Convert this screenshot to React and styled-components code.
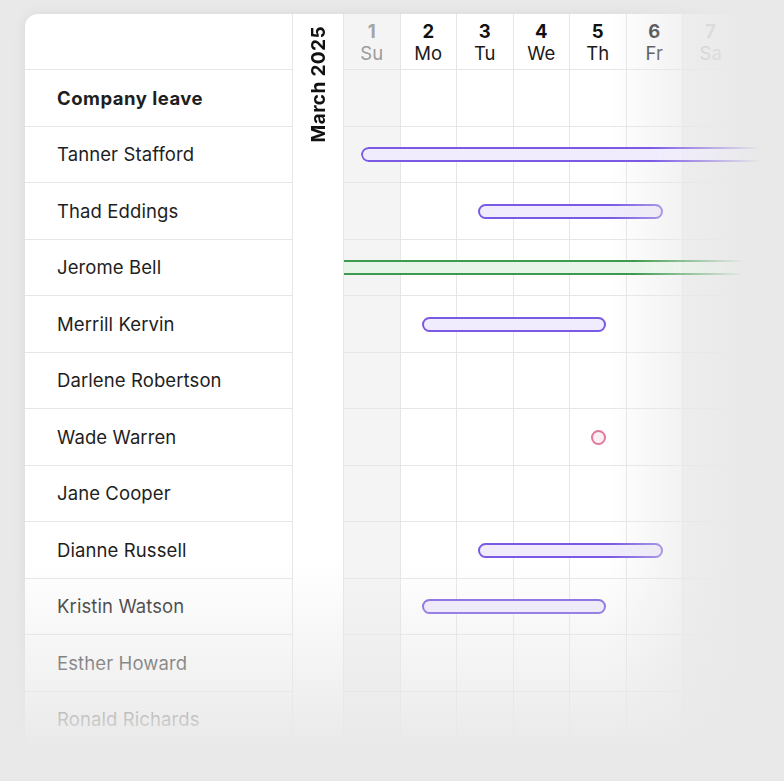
import React from 'react'
import styled, { createGlobalStyle, css } from 'styled-components'

const BG = '#e9e9e9'
const LINE = '#e6e6e6'
const COL = 56.5

const GlobalStyle = createGlobalStyle`
  html, body {
    margin: 0;
    padding: 0;
    background: ${BG};
    font-family: Inter, "Noto Sans", "Liberation Sans", sans-serif;
    -webkit-font-smoothing: antialiased;
  }
`

const days = [
    { n: 1, d: 'Su', off: true },
    { n: 2, d: 'Mo' },
    { n: 3, d: 'Tu' },
    { n: 4, d: 'We' },
    { n: 5, d: 'Th' },
    { n: 6, d: 'Fr' },
    { n: 7, d: 'Sa', off: true },
    { n: 8, d: 'Su', off: true },
]

// kind: bar | band | dot
const people = [
    { name: 'Company leave', bold: true },
    { name: 'Tanner Stafford', mark: { kind: 'bar', from: 1, to: 8, left: 17, right: 0, bleed: true } },
    { name: 'Thad Eddings', mark: { kind: 'bar', from: 3, to: 6, left: 21, right: 20 } },
    { name: 'Jerome Bell', mark: { kind: 'band', from: 1, to: 8 } },
    { name: 'Merrill Kervin', mark: { kind: 'bar', from: 2, to: 5, left: 21, right: 21 } },
    { name: 'Darlene Robertson' },
    { name: 'Wade Warren', mark: { kind: 'dot', from: 5 } },
    { name: 'Jane Cooper' },
    { name: 'Dianne Russell', mark: { kind: 'bar', from: 3, to: 6, left: 21, right: 20 } },
    { name: 'Kristin Watson', mark: { kind: 'bar', from: 2, to: 5, left: 21, right: 21 } },
    { name: 'Esther Howard' },
    { name: 'Ronald Richards' },
]

const Page = styled.div`
  position: relative;
  width: 100vw;
  height: 100vh;
  overflow: hidden;
  box-sizing: border-box;
  padding: 14px 0 0 25px;
`

const Card = styled.div`
  display: flex;
  width: 820px;
  background: #fff;
  border-top-left-radius: 13px;
  box-shadow: 0 0 14px rgba(0, 0, 0, 0.07);
  overflow: hidden;
`

const NameColumn = styled.div`
  width: 268px;
  flex-shrink: 0;
  border-right: 1px solid ${LINE};
  box-sizing: border-box;
`

const NameHead = styled.div`
  height: 56px;
  border-bottom: 1px solid ${LINE};
  box-sizing: border-box;
`

const NameRow = styled.div`
  height: ${COL}px;
  box-sizing: border-box;
  border-bottom: 1px solid ${LINE};
  display: flex;
  align-items: center;
  padding-left: 32px;
  font-size: 18.5px;
  color: #1e1e1e;
  font-weight: ${p => (p.$bold ? 700 : 400)};
  letter-spacing: ${p => (p.$bold ? '0.5px' : '0.1px')};
`

const MonthColumn = styled.div`
  width: 51px;
  flex-shrink: 0;
  border-right: 1px solid ${LINE};
  box-sizing: border-box;
  display: flex;
  justify-content: center;
  padding-top: 12px;
`

const MonthLabel = styled.div`
  writing-mode: vertical-rl;
  transform: rotate(180deg);
  font-size: 19px;
  font-weight: 700;
  color: #111;
  letter-spacing: 0.4px;
  height: max-content;
`

const DayGrid = styled.div`
  display: flex;
  flex-direction: column;
`

const HeadRow = styled.div`
  display: grid;
  grid-template-columns: repeat(${days.length}, ${COL}px);
  height: 56px;
`

const HeadCell = styled.div`
  box-sizing: border-box;
  border-right: 1px solid ${LINE};
  border-bottom: 1px solid ${LINE};
  background: ${p => (p.$off ? '#f4f4f4' : '#fff')};
  color: ${p => (p.$off ? '#9b9b9b' : '#1a1a1a')};
  display: flex;
  flex-direction: column;
  align-items: center;
  padding-top: 6px;
  font-size: 18.5px;
  line-height: 22px;

  b {
    font-weight: 700;
    color: ${p => (p.$off ? '#a5a5a5' : '#111')};
  }
`

const Row = styled.div`
  display: grid;
  grid-template-columns: repeat(${days.length}, ${COL}px);
  grid-template-rows: ${COL}px;
  align-items: center;
`

const Cell = styled.div`
  grid-row: 1;
  align-self: stretch;
  box-sizing: border-box;
  border-right: 1px solid ${LINE};
  border-bottom: 1px solid ${LINE};
  background: ${p => (p.$off ? '#f4f4f4' : '#fff')};
`

const fadeRight = css`
  position: relative;
  z-index: 3;
  -webkit-mask-image: linear-gradient(to right, #000 0, #000 290px, transparent 400px);
  mask-image: linear-gradient(to right, #000 0, #000 290px, transparent 400px);
`

const Bar = styled.div`
  grid-row: 1;
  height: 15px;
  box-sizing: border-box;
  border: 2px solid #7a5ae2;
  border-radius: 8px;
  background: #f0ebfd;
  ${p => p.$bleed && fadeRight}
`

const Band = styled.div`
  grid-row: 1;
  height: 15px;
  box-sizing: border-box;
  border-top: 2px solid #3e9a4f;
  border-bottom: 2px solid #3e9a4f;
  background: #e7f4e8;
  ${fadeRight}
`

const Dot = styled.div`
  grid-row: 1;
  justify-self: center;
  width: 15px;
  height: 15px;
  box-sizing: border-box;
  border: 2px solid #e0799b;
  border-radius: 50%;
  background: #fdf0f4;
`

const Fade = styled.div`
  position: absolute;
  inset: 0;
  z-index: 2;
  pointer-events: none;
  background:
    linear-gradient(to bottom, rgba(233, 233, 233, 0) 560px, rgba(233, 233, 233, 0.6) 680px, ${BG} 750px),
    linear-gradient(to right, rgba(233, 233, 233, 0) 610px, rgba(233, 233, 233, 0.72) 698px, ${BG} 745px);
`

const Mark = ({ mark }) => {
    if (!mark) return null
    if (mark.kind === 'dot') return <Dot style={{ gridColumn: mark.from }} />
    const span = { gridColumn: `${mark.from} / ${mark.to + 1}` }
    if (mark.kind === 'band') return <Band style={span} />
    return (
        <Bar
            $bleed={mark.bleed}
            style={{ ...span, marginLeft: mark.left, marginRight: mark.right }}
        />
    )
}

const App = () => {
    return (
        <>
            <GlobalStyle />
            <Page>
                <Card>
                    <NameColumn>
                        <NameHead />
                        {people.map(p => (
                            <NameRow key={p.name} $bold={p.bold}>{p.name}</NameRow>
                        ))}
                    </NameColumn>

                    <MonthColumn>
                        <MonthLabel>March 2025</MonthLabel>
                    </MonthColumn>

                    <DayGrid>
                        <HeadRow>
                            {days.map(d => (
                                <HeadCell key={d.n} $off={d.off}>
                                    <b>{d.n}</b>
                                    <span>{d.d}</span>
                                </HeadCell>
                            ))}
                        </HeadRow>
                        {people.map(p => (
                            <Row key={p.name}>
                                {days.map((d, i) => (
                                    <Cell key={d.n} $off={d.off} style={{ gridColumn: i + 1 }} />
                                ))}
                                <Mark mark={p.mark} />
                            </Row>
                        ))}
                    </DayGrid>
                </Card>
                <Fade />
            </Page>
        </>
    )
}

export default App
